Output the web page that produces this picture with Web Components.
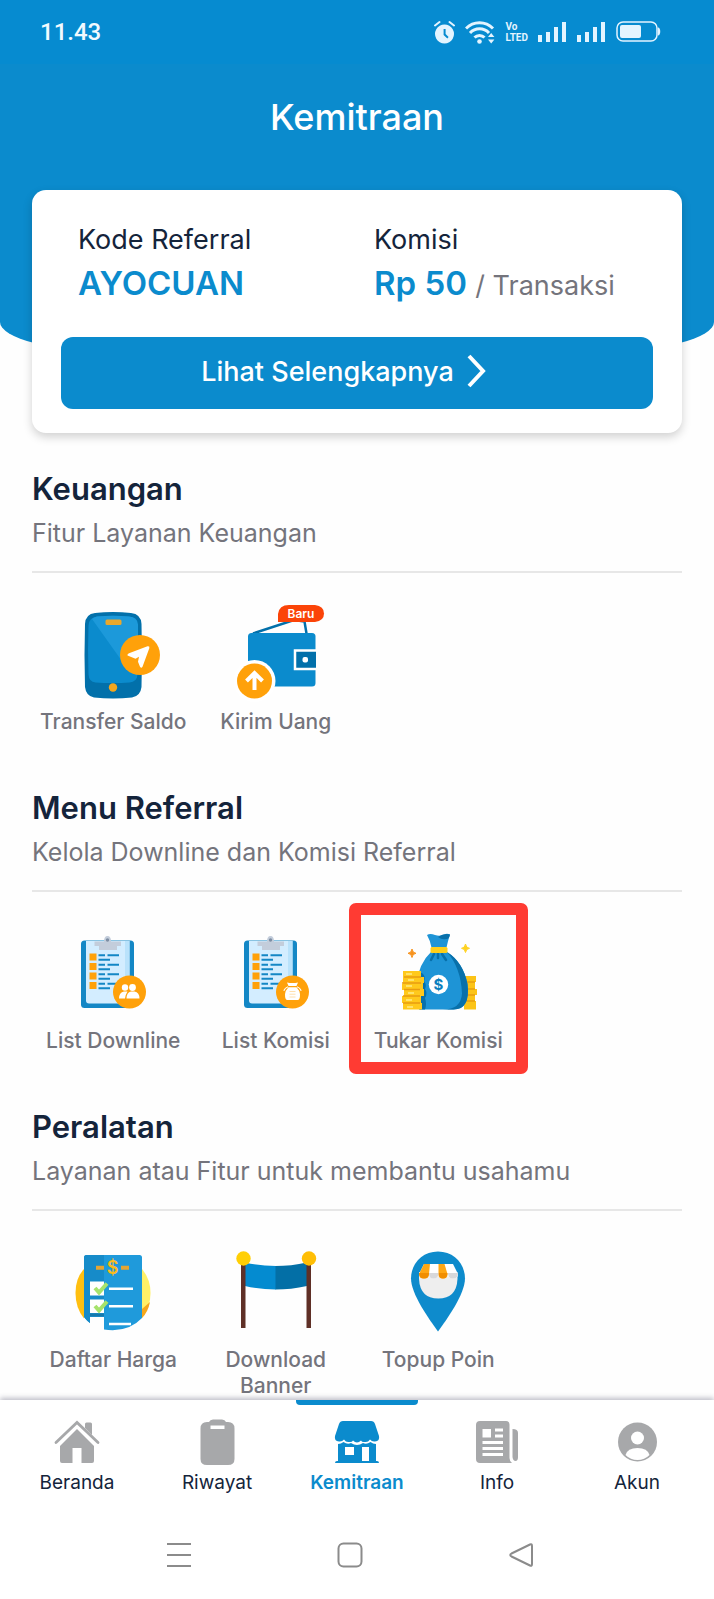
<!DOCTYPE html>
<html lang="id">
<head>
<meta charset="utf-8">
<meta name="viewport" content="width=device-width, initial-scale=1">
<title>Kemitraan</title>
<style>
    html {
        --blue: #0b8bcd;
        --ink: #14243b;
        --muted: #74747c;
    }

    body {
        margin: 0;
        min-height: 100vh;
        display: flex;
        flex-direction: column;
        background: #fefefe;
        color: var(--ink);
        font-family: Inter, "Open Sans", sans-serif;
    }

    main {
        flex: 1;
        padding: 0 32px;
    }
</style>
</head>
<body>

<template id="statusBarTmpl">
    <style>
        :host {
            display: flex;
            align-items: center;
            justify-content: space-between;
            height: 64px;
            padding: 0 53px 0 40px;
            box-sizing: border-box;
            background: #068bd0;
            color: #e3f4ff;
        }
        time { font: 500 24px/30px Roboto, sans-serif; color: #f2faff; }
        .icons { display: flex; align-items: center; gap: 10px; }
        .volte { font: 700 10px/11px Roboto, sans-serif; }
        svg { display: block; fill: currentColor; }
    </style>
    <time>11.43</time>
    <div class="icons">
        <svg width="21" height="24" viewBox="0 0 21 24">
            <path d="M10.500 4.500a9.500 9.500 0 1 0 .01 0zM9.600 9h2v5l3 3-1.300 1.500L9.600 15z" fill-rule="evenodd"/>
            <path d="M1 5.500L5.500 2M20 5.500L15.500 2" stroke="currentColor" stroke-width="2" stroke-linecap="round"/>
        </svg>
        <svg width="30" height="24" viewBox="0 0 30 24">
            <g fill="none" stroke="currentColor" stroke-width="3">
                <path d="M1 8.500a19 19 0 0 1 27 0"/>
                <path d="M5 13a13 13 0 0 1 19 0"/>
                <path d="M9.500 17.500a7 7 0 0 1 10 0"/>
            </g>
            <circle cx="14.500" cy="21.500" r="2.300"/>
            <path d="M23 17l3.200-4 3.200 4zM23 19.500l3.200 4 3.200-4z"/>
        </svg>
        <div class="volte">Vo<br>LTED</div>
        <svg width="29" height="22" viewBox="0 0 29 22"><path d="M0 14h4v7H0zM8 11h4v10H8zM16 6h4v15h-4zM24 1h4v20h-4z"/></svg>
        <svg width="29" height="22" viewBox="0 0 29 22"><path d="M0 14h4v7H0zM8 11h4v10H8zM16 6h4v15h-4zM24 1h4v20h-4z"/></svg>
        <svg width="45" height="22" viewBox="0 0 45 22">
            <rect x="1" y="1" width="40" height="19" rx="6" fill="none" stroke="currentColor" stroke-width="1.500"/>
            <rect x="4" y="4" width="21" height="13" rx="2"/>
            <path d="M42 6.500c3 0 3 8 0 8z"/>
        </svg>
    </div>
</template>

<template id="pageHeaderTmpl">
    <style>
        :host {
            display: block;
            height: 352px;
            background: var(--blue);
            border-radius: 0 0 120px 120px / 0 0 30px 30px;
            overflow: hidden;
        }
        h1 {
            margin: 28px 0 0;
            color: #fff;
            font-size: 36px;
            line-height: 50px;
            font-weight: 500;
            text-align: center;
        }
    </style>
    <status-bar></status-bar>
    <h1><slot></slot></h1>
</template>

<template id="referralCardTmpl">
    <style>
        :host {
            display: block;
            margin-top: -162px;
            padding: 32px 29px 24px;
            border-radius: 14px;
            background: #fff;
            box-shadow: 0 4px 10px rgba(0, 0, 0, .18);
            position: relative;
        }
        dl { display: grid; grid-template-columns: 1fr 1fr; margin: 0 0 31px; }
        dl div { padding-left: 17px; }
        dt { font-size: 27px; line-height: 36px; }
        dd { margin: 2px 0 0; font-size: 33px; line-height: 46px; font-weight: 600; color: var(--blue); white-space: nowrap; }
        small { font-size: 27px; line-height: 1; font-weight: 400; color: var(--muted); }
        button {
            display: flex;
            align-items: center;
            justify-content: center;
            gap: 11px;
            width: 100%;
            height: 72px;
            padding: 0 0 4px;
            border: 0;
            border-radius: 12px;
            background: var(--blue);
            color: #fff;
            font: inherit;
            font-size: 27px;
            font-weight: 500;
            cursor: pointer;
        }
    </style>
    <dl>
        <div><dt>Kode Referral</dt><dd><slot name="code"></slot></dd></div>
        <div><dt>Komisi</dt><dd><slot name="fee"></slot> <small>/ Transaksi</small></dd></div>
    </dl>
    <button type="button">Lihat Selengkapnya
        <svg width="48" height="36" viewBox="0 0 48 36" fill="none" stroke="#fff" stroke-width="4"><path d="M4 3l14 15L4 33"/></svg>
    </button>
</template>

<template id="menuSectionTmpl">
    <style>
        :host { display: block; margin-top: 34px; }
        :host(:not(:first-of-type)) { margin-top: 51px; }
        h2 { margin: 0; font-size: 31px; line-height: 44px; font-weight: 600; }
        p {
            margin: 4px 0 31px;
            padding-bottom: 20px;
            border-bottom: 2px solid #e7e7e7;
            color: var(--muted);
            font-size: 25px;
            line-height: 36px;
        }
        .tiles { display: grid; grid-template-columns: repeat(4, 1fr); }
    </style>
    <h2></h2>
    <p></p>
    <div class="tiles"><slot></slot></div>
</template>

<template id="menuTileTmpl">
    <style>
        :host { display: block; position: relative; }
        a {
            display: flex;
            flex-direction: column;
            align-items: center;
            gap: 9px;
            padding: 0 16px;
            color: var(--muted);
            font-size: 21px;
            line-height: 26px;
            font-weight: 500;
            text-align: center;
            text-decoration: none;
        }
        span { margin: 0 -12px; }
        ::slotted(svg) { display: block; width: 96px; height: 96px; overflow: visible; }
        /* red frame laid over the tile and its surroundings */
        :host([marked])::after {
            content: "";
            position: absolute;
            inset: -20px -8px;
            border: 12px solid #ff3b33;
            border-radius: 7px;
            pointer-events: none;
        }
    </style>
    <a href="#"><slot></slot><span></span></a>
</template>

<template id="bottomNavTmpl">
    <style>
        :host { display: block; background: #fff; box-shadow: 0 -2px 5px rgba(40, 40, 70, .3); position: relative; }
        nav { display: grid; grid-template-columns: repeat(5, 1fr); padding: 0 7px; }
    </style>
    <nav><slot></slot></nav>
</template>

<template id="navItemTmpl">
    <style>
        :host { display: block; }
        a {
            display: flex;
            flex-direction: column;
            align-items: center;
            gap: 4px;
            padding-top: 18px;
            color: var(--ink);
            font-size: 19px;
            line-height: 26px;
            text-decoration: none;
            position: relative;
        }
        ::slotted(svg) { display: block; width: 48px; height: 48px; color: #a7a8aa; }
        :host([active]) a { color: var(--blue); font-weight: 600; }
        :host([active]) ::slotted(svg) { color: var(--blue); }
        :host([active]) a::before {
            content: "";
            position: absolute;
            top: 0;
            left: 9px;
            right: 9px;
            height: 5px;
            border-radius: 0 0 4px 4px;
            background: var(--blue);
        }
    </style>
    <a href="#"><slot></slot><span></span></a>
</template>

<template id="systemNavTmpl">
    <style>
        :host {
            display: grid;
            grid-template-columns: repeat(3, 1fr);
            justify-items: center;
            padding: 46px 108px 31px 94px;
            background: #fff;
            position: relative;
        }
        button { padding: 0; border: 0; background: none; height: 26px; cursor: pointer; }
        svg { display: block; fill: none; stroke: #8b8b8b; stroke-width: 2; stroke-linejoin: round; }
    </style>
    <button type="button" aria-label="Menu"><svg width="26" height="26"><path d="M1 2h24M1 13h24M1 24h24"/></svg></button>
    <button type="button" aria-label="Home"><svg width="26" height="26"><rect x="1.500" y="1.500" width="23" height="23" rx="5"/></svg></button>
    <button type="button" aria-label="Back"><svg width="26" height="26"><path d="M22 2.500L3.500 11.500q-2.500 1.500 0 3L22 23.500q2 1 2-1.500V4q0-2.500-2-1.500z"/></svg></button>
</template>

<page-header>Kemitraan</page-header>

<main>
    <referral-card>
        <span slot="code">AYOCUAN</span>
        <span slot="fee">Rp 50</span>
    </referral-card>

    <menu-section heading="Keuangan" subheading="Fitur Layanan Keuangan">
        <menu-tile label="Transfer Saldo">
            <svg viewBox="0 0 96 96">
                <path d="M30 9q18-2 36 0 10 1 10.500 11 1 31 0 63-1 9-9.500 10.500-19 2-38 0Q21 92 20 83q-1-32 0-63Q20.500 10 30 9z" fill="#0270aa"/>
                <path d="M32 12.500q16-1.500 32 0 8 .5 8.500 8 1 25 0 50-.5 7.500-8 8-17 1-34 0-6.500-.5-7-8-1-24 0-49 .5-8 8.500-9z" fill="#0b8bcd"/>
                <path d="M27 15l32 45 14-11V20.500q-.5-7.500-9-8-16-1.500-32 0-3 .5-5 2.500z" fill="#1c99da"/>
                <rect x="40.500" y="15.500" width="16" height="5.500" rx="1.500" fill="#e9a82c"/>
                <circle cx="48" cy="83.500" r="4.200" fill="#f4a61d"/>
                <circle cx="75" cy="51" r="20" fill="#ffa10a"/>
                <path d="M62.500 51.500q-.5-1.500 1.500-2.200l18.500-7q2.500-.5 1.800 2l-6.800 18.500q-1.200 2-2.500 0l-2-5 1-5-3.500 2z" fill="#fff"/>
            </svg>
        </menu-tile>
        <menu-tile label="Kirim Uang">
            <svg viewBox="0 0 96 96">
                <path d="M25 29.500L66 16l10.500 1.500 2 12" fill="none" stroke="#0270aa" stroke-width="2.500"/>
                <rect x="20" y="29" width="67.500" height="53.500" rx="3.500" fill="#0b8bcd"/>
                <path d="M88 46.500H67v18.500h21" fill="#0270aa" stroke="#fff" stroke-width="2.500"/>
                <rect x="74.500" y="53" width="5.500" height="5.500" rx="2" fill="#fff"/>
                <circle cx="26.500" cy="77" r="21" fill="#fff"/>
                <circle cx="26.500" cy="77" r="17.500" fill="#ffa10a"/>
                <path d="M26.500 86V70M18.500 77l8-8 8 8" fill="none" stroke="#fff" stroke-width="4"/>
                <path d="M50 18V10Q51 1 61 1h26q9 1 9 8.500T87 18z" fill="#fb4408"/>
                <text x="73" y="14" text-anchor="middle" font-size="12" font-weight="600" fill="#fff">Baru</text>
            </svg>
        </menu-tile>
    </menu-section>

    <menu-section heading="Menu Referral" subheading="Kelola Downline dan Komisi Referral">
        <menu-tile label="List Downline">
            <svg viewBox="0 0 96 96">
                <rect x="16" y="17.500" width="53" height="67.500" rx="3.500" fill="#1487c5"/>
                <path d="M21 18h43.500v59q-1 3.500-4 3.500H24q-3 0-3-3z" fill="#d3edff"/>
                <path d="M60 18h4.500v46H60z" fill="#b9e2fb"/>
                <path d="M29.500 18.500h9.500q0-5.500 3.500-5.500t3.500 5.500H56V23h-4v4H34v-4h-4.500z" fill="#c3cddb"/>
                <circle cx="42.500" cy="17" r="1.700" fill="#7d8da3"/>
                <path d="M24.500 30.500h7v7h-7zM24.500 40h7v7h-7zM24.500 49.500h7v7h-7zM24.500 59h7v7h-7z" fill="#ffa10a"/>
                <path d="M33.500 32.200H40M42.500 32.200H54M33.500 36.800H45M33.500 41.700H40M42.500 41.700H54M33.500 46.300H45M33.500 51.200H40M42.500 51.200H54M33.500 55.800H45M33.500 60.700H40M42.500 60.700H54M33.500 65.300H45" stroke="#1487c5" stroke-width="2"/>
                <circle cx="64.500" cy="69" r="16.500" fill="#ffa10a"/>
                <g fill="#fff">
                    <circle cx="60" cy="64.500" r="3.200"/>
                    <circle cx="67.500" cy="64.500" r="3.400"/>
                    <path d="M54 75.500q0-6 5-7h3.500q-2 3-2.500 7zM61.500 75.500q0-6 4.500-7h3.500q5 1 5 7z"/>
                </g>
            </svg>
        </menu-tile>
        <menu-tile label="List Komisi">
            <svg viewBox="0 0 96 96">
                <rect x="16" y="17.500" width="53" height="67.500" rx="3.500" fill="#1487c5"/>
                <path d="M21 18h43.500v59q-1 3.500-4 3.500H24q-3 0-3-3z" fill="#d3edff"/>
                <path d="M60 18h4.500v46H60z" fill="#b9e2fb"/>
                <path d="M29.500 18.500h9.500q0-5.500 3.500-5.500t3.500 5.500H56V23h-4v4H34v-4h-4.500z" fill="#c3cddb"/>
                <circle cx="42.500" cy="17" r="1.700" fill="#7d8da3"/>
                <path d="M24.500 30.500h7v7h-7zM24.500 40h7v7h-7zM24.500 49.500h7v7h-7zM24.500 59h7v7h-7z" fill="#ffa10a"/>
                <path d="M33.500 32.200H40M42.500 32.200H54M33.500 36.800H45M33.500 41.700H40M42.500 41.700H54M33.500 46.300H45M33.500 51.200H40M42.500 51.200H54M33.500 55.800H45M33.500 60.700H40M42.500 60.700H54M33.500 65.300H45" stroke="#1487c5" stroke-width="2"/>
                <circle cx="64.500" cy="69" r="16.500" fill="#ffa10a"/>
                <path d="M59 59.500q5.500 1 11 0l-1.500 3.500h-8z" fill="#fff"/>
                <path d="M60.500 64.200h8q3.500 3.500 3.500 7 0 5.500-2 5.800H59q-2-.3-2-5.800 0-3.500 3.500-7z" fill="#fff"/>
                <path d="M60 63.800q-3 1-4.200 4M69 63.800q3 1 4.200 4" fill="none" stroke="#fff" stroke-width="1.200"/>
                <path d="M61.500 68.500h6M61.500 71.200h6M61.500 74h6" stroke="#ffe0ae" stroke-width="1"/>
            </svg>
        </menu-tile>
        <menu-tile label="Tukar Komisi" marked>
            <svg viewBox="0 0 96 96">
                <path d="M74 53h12v6h-1v7h2v6h-2v6h1v8.500H74z" fill="#fcc417"/>
                <path d="M76 59h9M77 66h8M77 72h8M76 78h9" stroke="#e89f11" stroke-width="1.500"/>
                <path d="M41 29h16q16 10 20.500 32 3 25.500-14 25.500H30Q24 76 26 62q3-22 15-33z" fill="#1e94d6"/>
                <path d="M57 29q16 10 20.500 32 3 25.500-14 25.500H53q18 0 19-16Q71 45 57 29z" fill="#0870aa"/>
                <path d="M26 50h6q4 3 2 8 3 4 1 8 3 4 0 9 2 6 0 11.500h-6z" fill="#0870aa"/>
                <path d="M37 12q3-2 8 0 5 1.500 9-.5 3-1.500 6 0-2 6-3.500 13h-15Q40 17 37 12z" fill="#1e94d6"/>
                <path d="M48 14q6-4 12-2.500-1 5-4 4.500-4 1-8-2z" fill="#0870aa"/>
                <path d="M44 31l-3 6M48 31v4M52 31l4 6" stroke="#0870aa" stroke-width="2.500" stroke-linecap="round"/>
                <rect x="40.500" y="24" width="17" height="6" rx="1.500" fill="#ffcf19"/>
                <path d="M13 48h18v6h3v6h-1v6h1v7h-3v7h1v6.500H13V80h-1v-7h2v-6h-2v-6h1z" fill="#ffc91c"/>
                <path d="M14 54h17M12 60h19M14 66.500h16M13 73h17M13 80h17" stroke="#e99c10" stroke-width="1.500"/>
                <path d="M16 51h6M18 57h6M16 63h6M18 70h6M16 77h6M17 84h6" stroke="#ffe36a" stroke-width="2"/>
                <circle cx="48.500" cy="61.500" r="9.700" fill="#fff"/>
                <text x="48.500" y="67" text-anchor="middle" font-size="15" font-weight="700" fill="#0b7fbe">$</text>
                <path d="M22 26q.5 4 4 4.300-3.500.3-4 4.200-.5-3.900-4-4.200 3.500-.3 4-4.300z" fill="#f7931e" stroke="#f7931e"/>
                <path d="M75.500 21q.5 4 4 4.300-3.500.3-4 4.200-.5-3.900-4-4.200 3.500-.3 4-4.300z" fill="#ffd21f" stroke="#ffd21f"/>
            </svg>
        </menu-tile>
    </menu-section>

    <menu-section heading="Peralatan" subheading="Layanan atau Fitur untuk membantu usahamu">
        <menu-tile label="Daftar Harga">
            <svg viewBox="0 0 96 96">
                <path d="M19 27v49.500Q10.500 66 10.500 51T19 27z" fill="#ffbf10"/>
                <path d="M77 27q8.500 10 8.500 24T77 76z" fill="#fff067"/>
                <path d="M77 67l8-7q-2 10-8 16z" fill="#f5a81c"/>
                <path d="M21.500 13h53q2.500 0 2.500 2.500V76Q63 91 39 87.500V75H25v6q-4-3-6-6V15.500Q19 13 21.500 13z" fill="#1f9adb"/>
                <path d="M39 13H21.500Q19 13 19 15.500V75q3 4 6 6v-9.500h14z" fill="#168bc9"/>
                <path d="M25 73h14" stroke="#1678ac" stroke-width="3"/>
                <path d="M25 39.500h14v14H25zM25 57.500h14v13.500H25z" fill="#fff"/>
                <path d="M30 46l4 4.500 8-9M30 64l4 4.500 8-9" fill="none" stroke="#a6e36c" stroke-width="4"/>
                <path d="M44 46.700h24M44 64.300h24M44 82h22" stroke="#fff" stroke-width="2.500"/>
                <path d="M31 25.700h8M56 25.700h8" stroke="#e4a533" stroke-width="4"/>
                <text x="47.500" y="32" text-anchor="middle" font-size="18" font-weight="600" fill="#fcbc1c">$</text>
            </svg>
        </menu-tile>
        <menu-tile label="Download Banner">
            <svg viewBox="0 0 96 96">
                <path d="M17 20.500Q32 24 48 24v23.500Q32 47.500 17 44z" fill="#048bd0"/>
                <path d="M47.500 24Q63 24 79 20.500V44q-16 3.500-31.500 3.500z" fill="#036fa6"/>
                <path d="M13 20h4.500v66H13zM78.500 20H83v66h-4.500z" fill="#5f3027"/>
                <circle cx="15.500" cy="16.500" r="7.200" fill="#ffcf05"/>
                <circle cx="81" cy="16.500" r="7.200" fill="#ffbe05"/>
            </svg>
        </menu-tile>
        <menu-tile label="Topup Poin">
            <svg viewBox="0 0 96 96">
                <path d="M48 9.500c15.500 0 27 12 27 27C75 52 57 77 48 89.500 39 77 21 52 21 36.500c0-15 11.500-27 27-27z" fill="#0e8bcc"/>
                <path d="M29 30h38.500v7q-1 19.500-19.200 19.500T29 37z" fill="#eee"/>
                <path d="M34 22h29l5 10q0 4.500-4.700 4.500T58 33q-1 3.500-5 3.500T48.500 33q-1 3.500-5 3.500T38.500 33q-1 3.500-5 3.500T29 32z" fill="#fff"/>
                <path d="M34 22h6l-1 10q0 4.500-5 4.500T29 32zM48.500 22h6l3 10q0 4.500-4.500 4.500T48.500 32z" fill="#ffa714"/>
                <path d="M29 31h10q0 5.500-5 5.500T29 31zM48.500 31h9q0 5.500-4.500 5.500t-4.500-5.500z" fill="#f18e00"/>
                <path d="M39 31h9.500q0 5.500-5 5.500T39 31zM58 31h10q0 5.500-5 5.500t-5-5.500z" fill="#d8d8da"/>
            </svg>
        </menu-tile>
    </menu-section>
</main>

<bottom-nav>
    <nav-item label="Beranda">
        <svg viewBox="0 0 48 48" fill="currentColor">
            <path d="M24 11l17 17v15q0 2-2 2H28.500V30h-9v15H9q-2 0-2-2V28z"/>
            <path d="M3 24.500L24 4.500l21 20" fill="none" stroke="currentColor" stroke-width="2.800" stroke-linecap="round"/>
            <path d="M32 6q0-1.500 1.500-1.500h4Q39 4.500 39 6v11l-7-7z"/>
        </svg>
    </nav-item>
    <nav-item label="Riwayat">
        <svg viewBox="0 0 48 48" fill="currentColor">
            <path fill-rule="evenodd" d="M20 1.500h9q3 0 4 2.500h2q6.500 0 6.500 6.500V41q0 6-6.500 6H14q-6.500 0-6.500-6V10.500Q7.500 4 14 4h2q1-2.500 4-2.500zM17.500 7.500V11h14V7.500z"/>
        </svg>
    </nav-item>
    <nav-item label="Kemitraan" active>
        <svg viewBox="0 0 48 48" fill="currentColor">
            <path d="M10 3h28q3 0 4 3l4 12q1 5-4 5.500-3 .5-5-2-2 3-5 2.500-3 .5-4-1.500-2 2-4 2t-4-2q-1 2-4 1.500-3 .5-5-2.500-2 2.500-5 2-5-.5-4-5.500L6 6q1-3 4-3z"/>
            <path fill-rule="evenodd" d="M5 26q3 0 5.500-2 4 3 7.500 1 3 2 6 2t6-2q3.500 2 7.500-1 2.500 2 5.500 2v17h1q2 0 2 2H2q0-2 2-2h1zM12 29v8h9v-8zM29 29v14h7V29z"/>
        </svg>
    </nav-item>
    <nav-item label="Info">
        <svg viewBox="0 0 48 48" fill="currentColor">
            <path fill-rule="evenodd" d="M7 3h26q3.500 0 3.500 3.500V40q0 3 2.500 5H7q-4 0-4-4V7q0-4 4-4zM9.500 11v8.500H18V11zM22 10.500v3h8v-3zM22 16.500v3h8v-3zM9.500 23v3H30v-3zM9.500 29v3H30v-3zM9.500 35v3H30v-3z"/>
            <path d="M39.500 11q5.500 0 5.500 4v24q0 4-2.500 4t-3-4z"/>
        </svg>
    </nav-item>
    <nav-item label="Akun">
        <svg viewBox="0 0 48 48">
            <circle cx="24.500" cy="24" r="19.500" fill="currentColor"/>
            <circle cx="24.500" cy="20" r="6.500" fill="#fff"/>
            <path d="M12.500 37q2-7 12-7t12 7q-5 5-12 5t-12-5z" fill="#fff"/>
        </svg>
    </nav-item>
</bottom-nav>
<system-nav></system-nav>

<script>
    class TemplateElement extends HTMLElement {
        constructor(templateId) {
            super();
            const t = document.querySelector(templateId);
            this.attachShadow({mode: 'open'});
            this.shadowRoot.appendChild(t.content.cloneNode(true));
        }

        setText(selector, attribute) {
            this.shadowRoot.querySelector(selector).textContent = this.getAttribute(attribute);
        }
    }

    class StatusBar extends TemplateElement {
        constructor() {
            super('#statusBarTmpl');
        }
    }

    class PageHeader extends TemplateElement {
        constructor() {
            super('#pageHeaderTmpl');
        }
    }

    class ReferralCard extends TemplateElement {
        constructor() {
            super('#referralCardTmpl');
        }
    }

    class MenuSection extends TemplateElement {
        constructor() {
            super('#menuSectionTmpl');
        }

        connectedCallback() {
            this.setText('h2', 'heading');
            this.setText('p', 'subheading');
        }
    }

    class MenuTile extends TemplateElement {
        constructor() {
            super('#menuTileTmpl');
        }

        connectedCallback() {
            this.setText('span', 'label');
        }
    }

    class BottomNav extends TemplateElement {
        constructor() {
            super('#bottomNavTmpl');
        }
    }

    class NavItem extends TemplateElement {
        constructor() {
            super('#navItemTmpl');
        }

        connectedCallback() {
            this.setText('span', 'label');
        }
    }

    class SystemNav extends TemplateElement {
        constructor() {
            super('#systemNavTmpl');
        }
    }

    window.customElements.define('status-bar', StatusBar);
    window.customElements.define('page-header', PageHeader);
    window.customElements.define('referral-card', ReferralCard);
    window.customElements.define('menu-section', MenuSection);
    window.customElements.define('menu-tile', MenuTile);
    window.customElements.define('bottom-nav', BottomNav);
    window.customElements.define('nav-item', NavItem);
    window.customElements.define('system-nav', SystemNav);
</script>
</body>
</html>
